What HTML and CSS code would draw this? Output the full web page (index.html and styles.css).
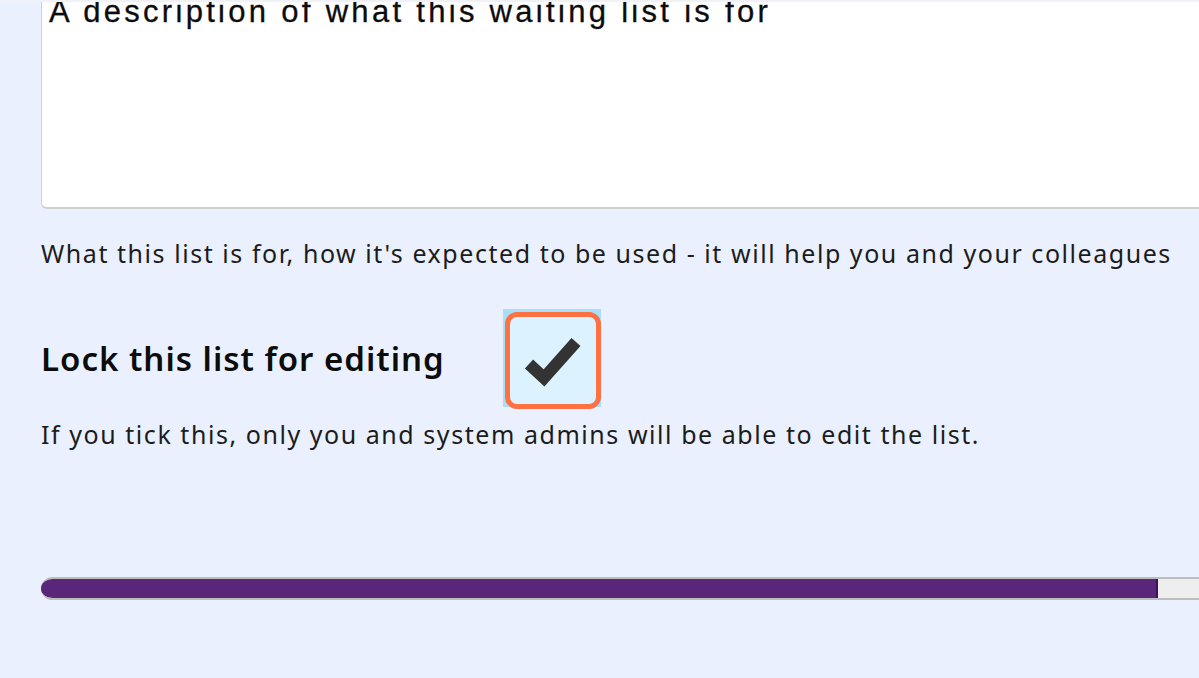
FILE: index.html
```html
<!DOCTYPE html>
<html lang="en">
<head>
<meta charset="utf-8">
<title>Waiting list</title>
<link rel="stylesheet" href="styles.css">
</head>
<body>
<main class="form">
  <div class="field">
    <div class="textarea">A description of what this waiting list is for</div>
    <p class="help help-first">What this list is for, how it's expected to be used - it will help you and your colleagues</p>
  </div>
  <div class="field">
    <div class="check-row">
      <label class="label">Lock this list for editing</label>
      <span class="checkbox">
        <span class="box">
          <svg viewBox="0 0 82 82" width="82" height="82" aria-hidden="true"><path d="M17 44 L32 58 L64 22" fill="none" stroke="#333" stroke-width="12" stroke-linejoin="miter" stroke-linecap="butt"/></svg>
        </span>
      </span>
    </div>
    <p class="help help-second">If you tick this, only you and system admins will be able to edit the list.</p>
  </div>
  <div class="progress"><div class="progress-fill" style="width:96.3%"></div></div>
</main>
</body>
</html>
```
FILE: styles.css
```css
html, body {
  margin: 0;
  padding: 0;
  background: #EAF0FD;
  height: 100%;
  overflow: hidden;
}
body {
  border-top: 2px solid #F1F1F8;
  box-sizing: border-box;
}
.form {
  padding-left: 41px;
  font-family: "Noto Sans", sans-serif;
  color: #1c1c1c;
}
.textarea {
  margin-top: -40px;
  height: 247px;
  box-sizing: border-box;
  background: #fff;
  border: 1px solid #d0d0d0;
  border-bottom: 2px solid #cfcfcf;
  border-radius: 6px 0 0 6px;
  border-right: none;
  padding: 31px 7px;
  font-family: "Liberation Sans", Arial, sans-serif;
  font-size: 31px;
  line-height: 36px;
  letter-spacing: 3.3px;
  color: #0c0c0c;
  -webkit-text-stroke: 0.3px #0c0c0c;
}
.help {
  margin: 0;
  font-size: 25px;
  line-height: 30px;
  letter-spacing: 1.55px;
  color: #1c1c1c;
  white-space: nowrap;
}
.help-first {
  margin-top: 29px;
}
.check-row {
  display: flex;
  align-items: center;
  gap: 58px;
  margin-top: 41px;
}
.label {
  font-size: 33px;
  font-weight: 600;
  letter-spacing: 1px;
  color: #0c0c0c;
}
.checkbox {
  width: 98px;
  height: 98px;
  box-sizing: border-box;
  background: #A6DFF8;
  padding: 3px 0 0 2px;
  display: flex;
}
.box {
  width: 97px;
  height: 97px;
  box-sizing: border-box;
  border: 5px solid #FF7043;
  border-radius: 12px;
  background: #DCF3FF;
  display: flex;
  align-items: center;
  justify-content: center;
}
.help-second {
  margin-top: 12px;
}
.progress {
  margin-top: 128px;
  height: 23px;
  background: #EEEEEE;
  border-top: 2px solid #bdbdbd;
  border-bottom: 2px solid #bdbdbd;
  box-sizing: border-box;
  border-radius: 12px 0 0 12px;
  overflow: hidden;
  display: flex;
}
.progress-fill {
  background: #5A267A;
  border-right: 2px solid #3f0f60;
  margin: -2px 0;
}
```
